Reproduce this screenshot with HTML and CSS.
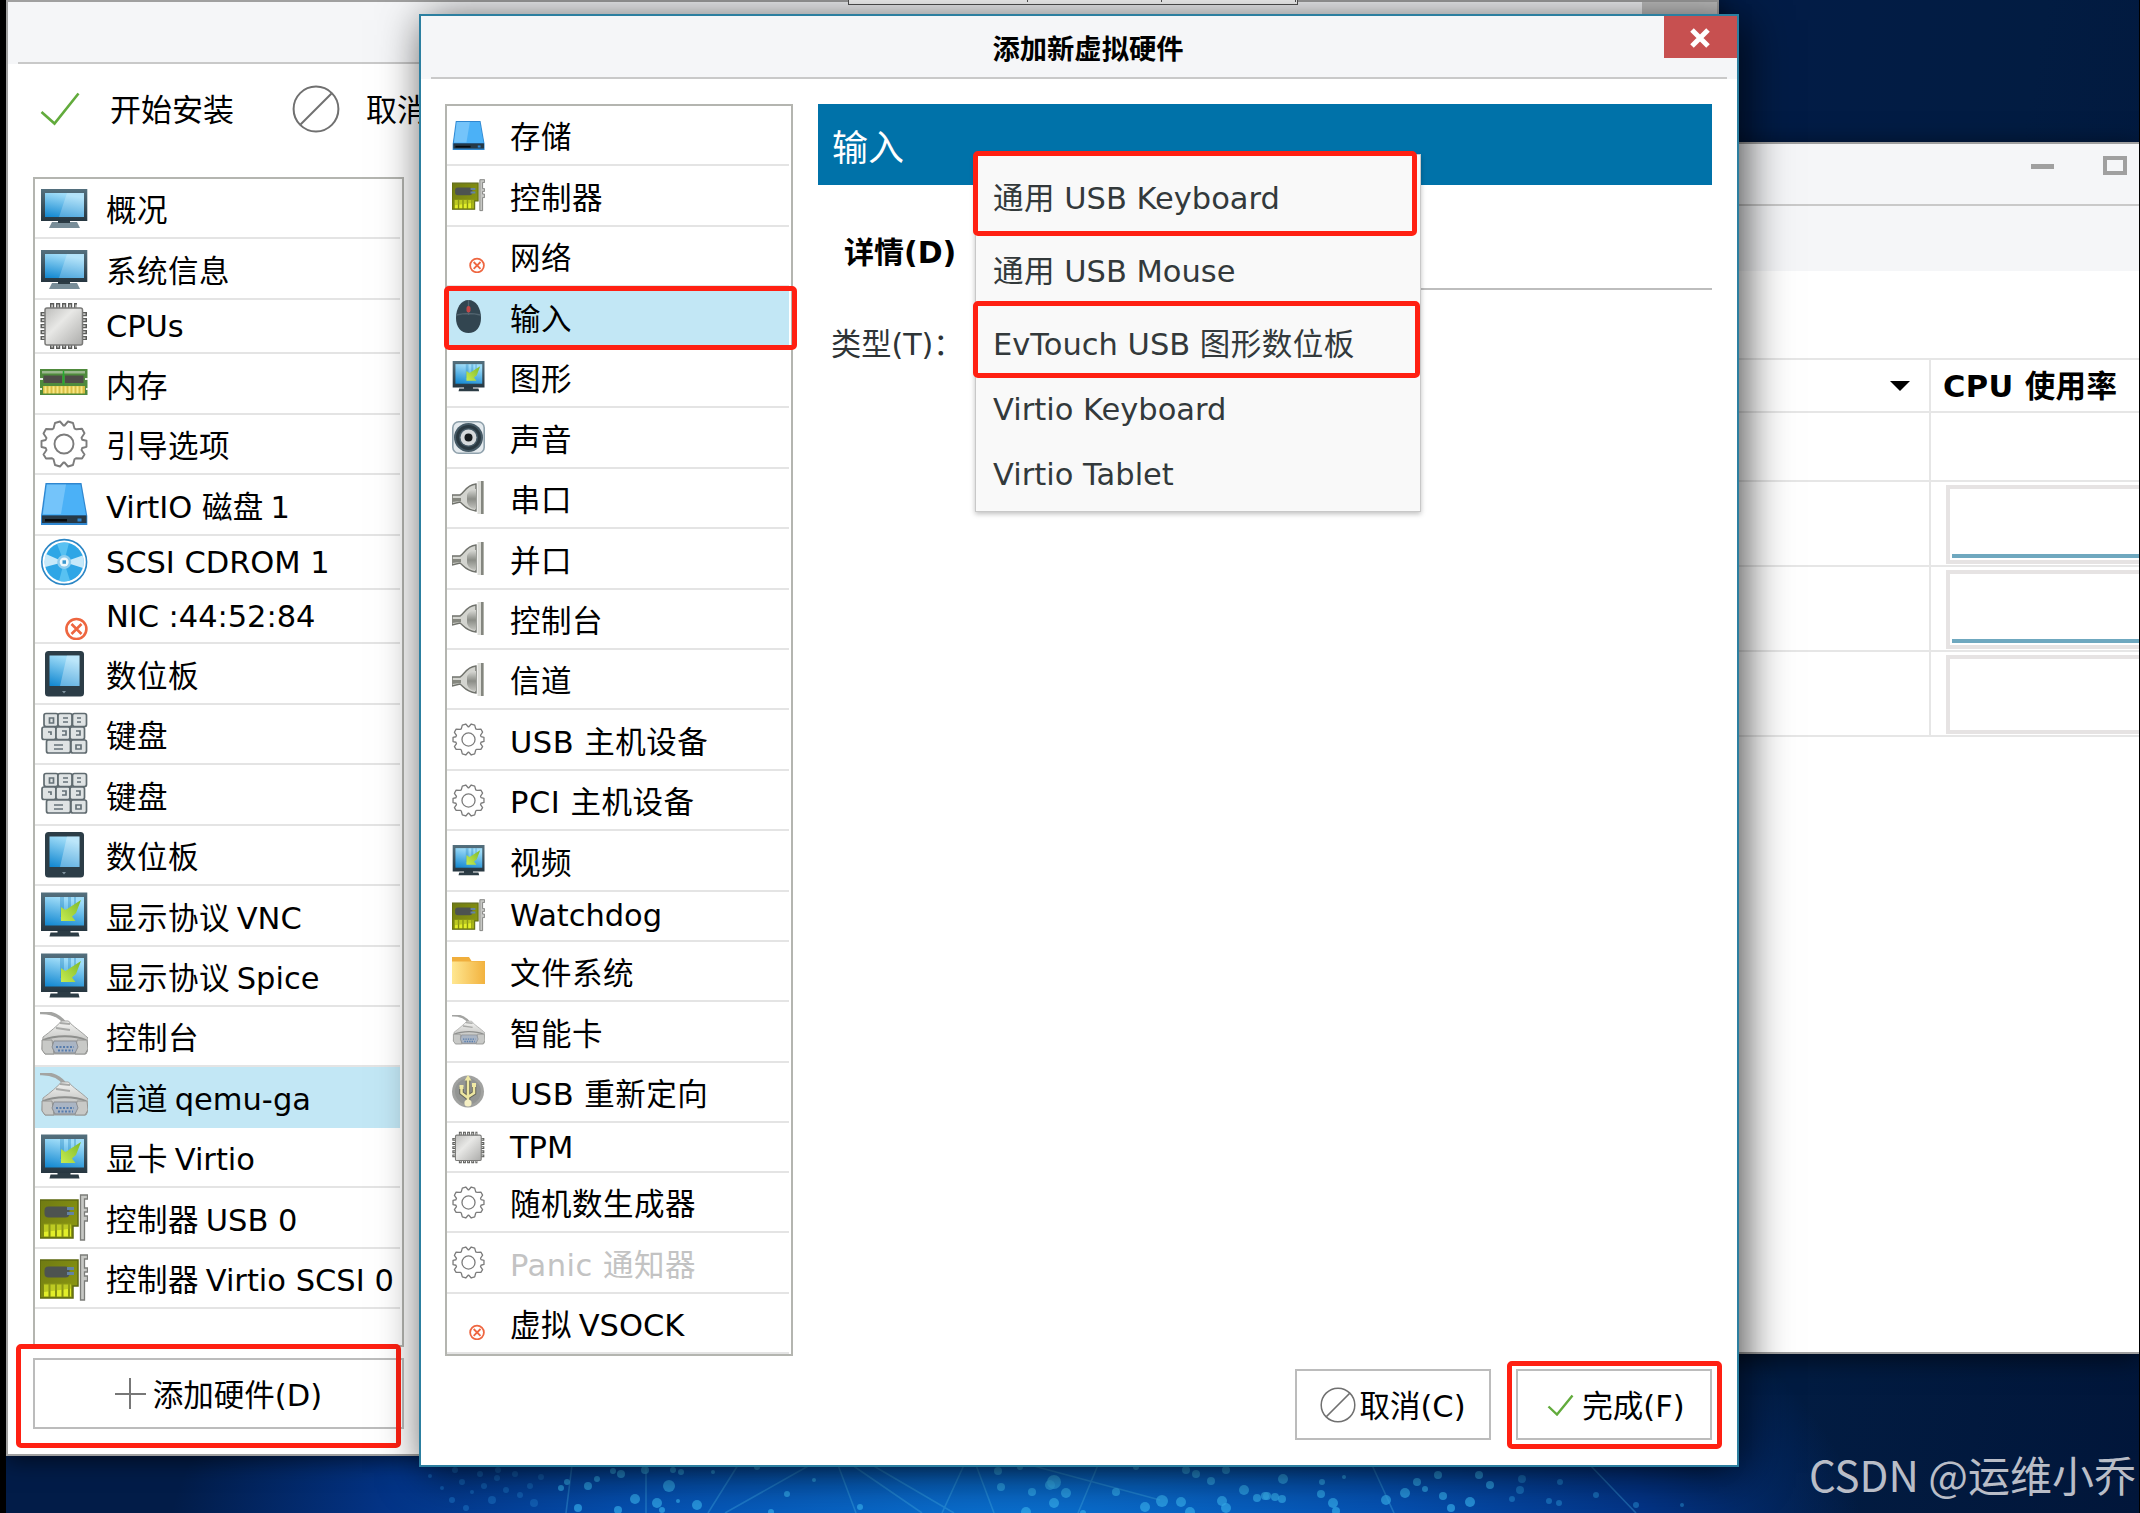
FILE: index.html
```html
<!DOCTYPE html>
<html lang="zh-CN">
<head>
  <meta charset="UTF-8" />
  <title>添加新虚拟硬件</title>
  <link rel="stylesheet" href="styles.css">
</head>
<body>

  <!-- icon definitions -->
  <svg class="defs" width="0" height="0">
    <defs>
      <linearGradient id="gScreen" x1="0.3" y1="0" x2="0" y2="1"><stop offset="0" stop-color="#9fdcf8"/><stop offset="1" stop-color="#0f86d0"/></linearGradient>
      <linearGradient id="gFrame" x1="0" y1="0" x2="0" y2="1"><stop offset="0" stop-color="#54707e"/><stop offset="1" stop-color="#263640"/></linearGradient>
      <linearGradient id="gArrow" x1="1" y1="0" x2="0" y2="1"><stop offset="0" stop-color="#7cb82a"/><stop offset="1" stop-color="#c8ec50"/></linearGradient>
      <linearGradient id="gMetal" x1="0" y1="0" x2="1" y2="1"><stop offset="0" stop-color="#bcbcba"/><stop offset="0.4" stop-color="#e8e8e6"/><stop offset="1" stop-color="#acacaa"/></linearGradient>
      <linearGradient id="gFolder"><stop offset="0" stop-color="#ffe791"/><stop offset="1" stop-color="#f2b23e"/></linearGradient>
      <linearGradient id="gSilver" x1="0" y1="0" x2="0" y2="1"><stop offset="0" stop-color="#f4f4f2"/><stop offset="1" stop-color="#a9aaa8"/></linearGradient>
      <linearGradient id="gPcb" x1="0" y1="0" x2="1" y2="1"><stop offset="0" stop-color="#6f7a12"/><stop offset="1" stop-color="#8f9b12"/></linearGradient>
      <linearGradient id="gPlug" x1="0" y1="0" x2="0" y2="1"><stop offset="0" stop-color="#d8d9d5"/><stop offset="0.5" stop-color="#8b8d87"/><stop offset="1" stop-color="#c2c3be"/></linearGradient>
    </defs>

    <symbol id="monitor" viewBox="0 0 48 48">
      <path d="M9 44l3-6h25l3 6z" fill="#788d98"/>
      <path d="M18 36h12v3H18z" fill="#2b3b44"/>
      <path d="M1 5h46.300v32H1z" fill="url(#gFrame)"/>
      <path d="M5 9h39v24H5z" fill="url(#gScreen)"/>
      <path d="M27 9h17v24H19z" fill="#fff" opacity=".22"/>
    </symbol>

    <symbol id="display" viewBox="0 0 48 48">
      <path d="M9.500 45.500l1-4h7v-3h13v3h8l1 4z" fill="#2c3c45"/>
      <path d="M1 1.500h46.300V40H1z" fill="url(#gFrame)"/>
      <path d="M5 6h39v28.500H5z" fill="url(#gScreen)"/>
      <path d="M20 6h4v20h-4zM28 6h3v12h-3zM34 6h2v9h-2z" fill="#0d74b4" opacity=".3"/>
      <path d="M21 16l4.500 3L41 9l-5 13-4 3.500 3.500 4.500H21z" fill="url(#gArrow)"/>
    </symbol>

    <symbol id="cpu" viewBox="0 0 48 48">
      <path d="M10 4.500h27M10 43.500h27M4 10v28M43.500 10v28" stroke="#5b5c5a" stroke-width="7" stroke-dasharray="4.200 1.800" fill="none"/>
      <path d="M10 4.500h27M10 43.500h27M4 10v28M43.500 10v28" stroke="#c9c9c7" stroke-width="4" stroke-dasharray="1.600 4.400" stroke-dashoffset="-1.300" fill="none"/>
      <rect x="5" y="6" width="37.500" height="37" rx="2" fill="url(#gMetal)" stroke="#7a7a78" stroke-width="1.500"/>
    </symbol>

    <symbol id="memory" viewBox="0 0 48 48">
      <path d="M0 10h47.500v26H0z" fill="#4f8a3c"/>
      <path d="M2 12h43v2.500H2z" fill="#9bb78e"/>
      <path d="M3.500 16.500H22V24H3.500zM25 16.500h18.500V24H25z" fill="#4e4c48"/>
      <path d="M3 27h42v7.500H3z" fill="#d8bf45"/>
      <path d="M4.500 30.700h39" stroke="#f8e783" stroke-width="7" stroke-dasharray="2 2"/>
      <path d="M23.500 12v14" stroke="#25a833" stroke-width="1.500"/>
      <path d="M0 20h3M45 20h3M0 30h2M46 30h2" stroke="#e8efe4" stroke-width="2"/>
    </symbol>

    <symbol id="gear" viewBox="0 0 48 48">
      <g fill="none" stroke="#7c7c7c" stroke-width="1.900" stroke-linejoin="round">
        <circle cx="24" cy="24" r="9.500"/>
        <path d="M15 3l5-1.500 3.500 4h1l3.500-4L33 3l1.500 5.500.8.500 1.200.3 5.500-.5 2.500 4.500-3 4.500.7 2 4.300 1v6l-4.300 1.200-.7 2 3 4.500-2.500 4-6-.2-1.500 1L33 45l-5 1.500-3.500-4h-1l-3.500 4L15 45l-1.500-5.700-1.500-1-6 .2L3.500 34.500l3-4.500-.8-2L1.500 27v-6l4.200-1 .8-2-3-4.500L6 9l6 .3 1.500-.8z"/>
      </g>
    </symbol>

    <symbol id="disk" viewBox="0 0 48 48">
      <path d="M5.500 3h36L47.300 36v9H1v-9z" fill="#2f86cf"/>
      <path d="M6.500 4.500h34L46 35H2.500z" fill="#4bb1f7"/>
      <path d="M7 4.500h19L21 34H3z" fill="#8fd0fb" opacity=".6"/>
      <path d="M2 35.500h44.500v7.500H2z" fill="#263947"/>
      <path d="M5 39h22v2.500H5z" fill="#06090c"/>
      <path d="M37.500 38.500h4v3h-4z" fill="#2f86cf"/>
    </symbol>

    <symbol id="cdrom" viewBox="0 0 48 48">
      <circle cx="24.200" cy="24" r="22.400" fill="#fff" stroke="#2b86c5" stroke-width="1.600"/>
      <circle cx="24.200" cy="24" r="19.500" fill="#2ea6e6"/>
      <path d="M24 24L6 16a19.500 19.500 0 0 0-.8 13zM24 24l18.500-6.500a19.500 19.500 0 0 1 .5 12.500z" fill="#c6e9fa"/>
      <path d="M24 24L17 6a19.500 19.500 0 0 1 12-1zM24 24l6 18.500a19.500 19.500 0 0 1-11 .5z" fill="#58c1f2"/>
      <circle cx="24.200" cy="24" r="7" fill="#8fcdee"/>
      <circle cx="24.200" cy="24" r="4.500" fill="#f0f8fc"/>
      <path d="M22.500 22.300h3.500v3.500h-3.500z" fill="#3d98cf"/>
    </symbol>

    <symbol id="nic" viewBox="0 0 48 48">
      <g fill="none" stroke="#ee6640">
        <circle cx="36.400" cy="37" r="10" stroke-width="2.600"/>
        <path d="M31.500 32l10 10M41.500 32l-10 10" stroke-width="2.600"/>
      </g>
    </symbol>

    <symbol id="tablet" viewBox="0 0 48 48">
      <rect x="5" y="1" width="39" height="45.500" rx="3.500" fill="#2c3d47"/>
      <path d="M9.500 5.500h30V36h-30z" fill="url(#gScreen)"/>
      <path d="M27 5.500h12.500V36H20z" fill="#fff" opacity=".3"/>
      <path d="M22 41h4l-2 2.500z" fill="#8194a0"/>
    </symbol>

    <symbol id="keyboard" viewBox="0 0 48 48">
      <g fill="#dfe3e4" stroke="#606b70" stroke-width="1.700">
        <rect x="4" y="3.500" width="14" height="13" rx="2"/><rect x="18" y="3.500" width="14" height="13" rx="2"/><rect x="32.500" y="3.500" width="14" height="13" rx="2"/>
        <rect x="2" y="17" width="14" height="12.500" rx="2"/><rect x="16" y="17" width="14" height="12.500" rx="2"/><rect x="30" y="17" width="14.500" height="12.500" rx="2"/>
        <rect x="6.500" y="30" width="24" height="13" rx="2"/><rect x="31" y="30" width="15.500" height="13" rx="2"/>
      </g>
      <path d="M9.500 8h4v5h-4zM23 8h5M23 12h5M37 8h4M37 12h4M8 22h3v3M22 21h4v4h-4M36 21h4v4h-4M14 35h9M14 39h9M36 35h5v4h-5z" fill="none" stroke="#667278" stroke-width="1.700"/>
    </symbol>

    <symbol id="serial" viewBox="0 0 48 48">
      <path d="M0 .5C12 0 21 5 25.500 12" fill="none" stroke="#a3a4a2" stroke-width="3.500"/>
      <path d="M3 25C10 20 18 13 21.500 9h7C32 14 42 20 48 26l1 10-3 6H5l-3-5z" fill="url(#gSilver)" stroke="#a0a19f"/>
      <path d="M3 28c12-5 32-5 43 0" fill="none" stroke="#8e8f8d" stroke-width="1.800"/>
      <path d="M20 11l10 1M16 16l14 2" stroke="#a8a9a7" stroke-width="2"/>
      <path d="M2 28h10l2 14H5l-3-4zM47 28H37l-2 14h10l3-5z" fill="#c8c9c7" stroke="#939492"/>
      <path d="M14 29h22l2 6-3 6H15l-3-6z" fill="#aab5c4" stroke="#8c8f93"/>
      <path d="M16 35h18M18 38.500h15" stroke="#577dad" stroke-width="2" stroke-dasharray="2 1.500"/>
    </symbol>

    <symbol id="card" viewBox="0 0 48 48">
      <path d="M0 6h38v26h-5v12H0z" fill="url(#gPcb)" stroke="#5d6810" stroke-width="1.500"/>
      <rect x="4.500" y="12.500" width="25" height="11" rx="4" fill="#4d5350"/>
      <path d="M27 13h7v3h-7zM27 18h7v3h-7z" fill="#6383a4"/>
      <path d="M4 36.500h27" stroke="#e2ee2a" stroke-width="12" stroke-dasharray="4.500 2"/>
      <path d="M3.500 29.500h28v5L4 38z" fill="#98a51a" opacity=".5"/>
      <path d="M40.500 1h7v4h-3v9h3v4h-3v4h3v5h-3v19h-4z" fill="#c7c8c5" stroke="#7c7d7a" stroke-width="1.300"/>
    </symbol>

    <symbol id="mouse" viewBox="0 0 33 33">
      <path d="M16.500 0C9 0 4 8 4 18c0 9 5 15 12.500 15S29 27 29 18C29 8 24 0 16.500 0z" fill="#324550"/>
      <path d="M16.500 0v15M4.500 15c8-2 16-2 24 0" fill="none" stroke="#52646f" stroke-width="1.300"/>
      <rect x="14.500" y="6" width="4" height="6.500" rx="2" fill="#c54646"/>
    </symbol>

    <symbol id="sound" viewBox="0 0 33 33">
      <rect x=".8" y=".8" width="31.400" height="31.400" rx="6" fill="#e4eaee" stroke="#8fa1ac" stroke-width="1.600"/>
      <circle cx="16.500" cy="16.500" r="14.500" fill="#465a66"/>
      <circle cx="16.500" cy="16.500" r="11" fill="none" stroke="#2a3942" stroke-width="3"/>
      <circle cx="16.500" cy="16.500" r="8" fill="#d5d9dc"/>
      <circle cx="16.500" cy="16.500" r="4" fill="#151a1d"/>
    </symbol>

    <symbol id="port" viewBox="0 0 33 33">
      <path d="M0 14h8c4-2 6-10 16-11v27c-10-1-12-6-16-9l-8 2z" fill="#d3d4cf" stroke="#70726c" stroke-width="1.400"/>
      <path d="M0 17h9v3l-9 1z" fill="#85877f"/>
      <path d="M15 14c1-4 5-6 9-6v20c-5 0-8-3-9-7z" fill="url(#gPlug)"/>
      <path d="M25.500 0h6.500v33h-6.500z" fill="#dcddd8"/>
      <path d="M29 0h2.500v33H29z" fill="#84867f"/>
    </symbol>

    <symbol id="folder" viewBox="0 0 33 33">
      <path d="M0 3h17l2.500 4H33v10H0z" fill="#f0ae3c"/>
      <path d="M0 7.500h33V30H0z" fill="url(#gFolder)"/>
    </symbol>

    <symbol id="usb" viewBox="0 0 33 33">
      <circle cx="16" cy="16.500" r="16" fill="#a1a2a0"/>
      <circle cx="16" cy="16.500" r="13" fill="#8b8c8a" opacity=".6"/>
      <g fill="none" stroke="#64645a" stroke-width="4.500"><path d="M16 4v23M9.500 12v6l6.500 5M22 10v8l-6 4"/></g>
      <g fill="none" stroke="#ede6a0" stroke-width="2.500"><path d="M16 4v23M9.500 12v6l6.500 5M22 10v8l-6 4"/></g>
      <path d="M12.500 5.500L16 0l3.500 5.500zM7.500 10h4v4h-4zM20 8h4v4h-4z" fill="#f0e9a5"/>
      <circle cx="16" cy="28" r="3.600" fill="#f6f0c4"/>
    </symbol>

    <symbol id="forbid" viewBox="0 0 48 48">
      <g fill="none" stroke="#707070" stroke-width="2"><circle cx="24" cy="24" r="22.400"/><path d="M8.500 39.500l31-31"/></g>
    </symbol>
    <symbol id="tick" viewBox="0 0 40 34">
      <path d="M1.500 20L14.500 31.500 38.500 1.500" fill="none" stroke="#62ab3c" stroke-width="2.600"/>
    </symbol>
    <symbol id="tick-small" viewBox="0 0 27 22">
      <path d="M1.500 12.500L10 20.500 25.500 1.500" fill="none" stroke="#62ab3c" stroke-width="2.400"/>
    </symbol>
  </svg>

  <div class="desktop">
    <svg class="wallpaper" id="wallpaper" width="2140" height="73" viewBox="0 1440 2140 73">
      <g stroke="#48b4e8" stroke-width="1.600" opacity=".35">
        <path d="M738 1465l-30 48M810 1465l-85 48M838 1465l18 48M852 1465l70 48M872 1465l82 48M964 1465l-22 48M976 1465l18 48M1030 1465l130 35M1098 1465l-20 48M1372 1465l22 48M1590 1465l46 48M572 1465l-6 48M646 1465v48"/>
      </g>
    </svg>

    <!-- virt-manager main window -->
    <section class="window manager">
      <div class="titlebar">
        <span class="minimize"></span>
        <span class="maximize"></span>
      </div>
      <div class="manager-tools"></div>
      <div class="manager-gap"></div>
      <div class="vm-table">
        <div class="cell head sort"><i class="caret"></i></div><div class="cell head cpu-head">CPU 使用率</div>
        <div class="cell"></div><div class="cell"></div>
        <div class="cell vm"></div><div class="cell vm"><div class="graph busy"></div></div>
        <div class="cell vm"></div><div class="cell vm"><div class="graph busy"></div></div>
        <div class="cell vm"></div><div class="cell vm"><div class="graph"></div></div>
      </div>
    </section>

    <!-- machine details window -->
    <section class="window details">
      <div class="titlebar"><span class="inactive-close"></span></div>
      <div class="toolbar">
        <svg class="tick"><use href="#tick"/></svg><span>开始安装</span>
        <svg class="forbid"><use href="#forbid"/></svg><span>取消安装</span>
      </div>
      <ul class="hw-list">
        <li><svg><use href="#monitor"/></svg><span>概况</span></li>
        <li><svg><use href="#monitor"/></svg><span>系统信息</span></li>
        <li class="latin"><svg><use href="#cpu"/></svg><span>CPUs</span></li>
        <li><svg><use href="#memory"/></svg><span>内存</span></li>
        <li><svg><use href="#gear"/></svg><span>引导选项</span></li>
        <li><svg><use href="#disk"/></svg><span>VirtIO <b>磁盘 </b>1</span></li>
        <li class="latin"><svg><use href="#cdrom"/></svg><span>SCSI CDROM 1</span></li>
        <li class="latin"><svg><use href="#nic"/></svg><span>NIC :44:52:84</span></li>
        <li><svg><use href="#tablet"/></svg><span>数位板</span></li>
        <li><svg><use href="#keyboard"/></svg><span>键盘</span></li>
        <li><svg><use href="#keyboard"/></svg><span>键盘</span></li>
        <li><svg><use href="#tablet"/></svg><span>数位板</span></li>
        <li><svg><use href="#display"/></svg><span><b>显示协议 </b>VNC</span></li>
        <li><svg><use href="#display"/></svg><span><b>显示协议 </b>Spice</span></li>
        <li><svg><use href="#serial"/></svg><span>控制台</span></li>
        <li class="selected"><svg><use href="#serial"/></svg><span><b>信道 </b>qemu-ga</span></li>
        <li><svg><use href="#display"/></svg><span><b>显卡 </b>Virtio</span></li>
        <li><svg><use href="#card"/></svg><span><b>控制器 </b>USB 0</span></li>
        <li><svg><use href="#card"/></svg><span><b>控制器 </b>Virtio SCSI 0</span></li>
      </ul>
      <div class="add-row">
        <button class="add-btn"><i class="plus"></i><span>添加硬件(D)</span></button>
        <div class="mark mark-add"></div>
      </div>
    </section>

    <div class="top-panel"><i></i><i></i><i></i></div>

    <!-- add hardware dialog -->
    <section class="window dialog">
      <div class="titlebar">
        <h1>添加新虚拟硬件</h1>
        <button class="close"><svg viewBox="0 0 20 20"><path d="M2 2l16 16M18 2L2 18" stroke="#fff" stroke-width="5"/></svg></button>
      </div>
      <div class="dialog-body">
        <ul class="hw-list small">
          <li><svg><use href="#disk"/></svg><span>存储</span></li>
          <li><svg><use href="#card"/></svg><span>控制器</span></li>
          <li><svg><use href="#nic"/></svg><span>网络</span></li>
          <li class="selected"><svg><use href="#mouse"/></svg><span>输入</span><div class="mark mark-row"></div></li>
          <li><svg><use href="#display"/></svg><span>图形</span></li>
          <li><svg><use href="#sound"/></svg><span>声音</span></li>
          <li><svg><use href="#port"/></svg><span>串口</span></li>
          <li><svg><use href="#port"/></svg><span>并口</span></li>
          <li><svg><use href="#port"/></svg><span>控制台</span></li>
          <li><svg><use href="#port"/></svg><span>信道</span></li>
          <li><svg><use href="#gear"/></svg><span>USB 主机设备</span></li>
          <li><svg><use href="#gear"/></svg><span>PCI 主机设备</span></li>
          <li><svg><use href="#display"/></svg><span>视频</span></li>
          <li class="latin"><svg><use href="#card"/></svg><span>Watchdog</span></li>
          <li><svg><use href="#folder"/></svg><span>文件系统</span></li>
          <li><svg><use href="#serial"/></svg><span>智能卡</span></li>
          <li><svg><use href="#usb"/></svg><span>USB 重新定向</span></li>
          <li class="latin"><svg><use href="#cpu"/></svg><span>TPM</span></li>
          <li><svg><use href="#gear"/></svg><span>随机数生成器</span></li>
          <li class="disabled"><svg><use href="#gear"/></svg><span>Panic 通知器</span></li>
          <li><svg><use href="#nic"/></svg><span><b>虚拟 </b>VSOCK</span></li>
        </ul>

        <div class="page">
          <h2>输入</h2>
          <div class="tab"><span>详情(D)</span><hr></div>
          <div class="type-row">类型(T)：</div>

          <div class="menu">
            <div class="item"><b>通用 </b>USB Keyboard</div>
            <div class="item"><b>通用 </b>USB Mouse</div>
            <div class="item">EvTouch USB <b>图形数位板</b></div>
            <div class="item latin">Virtio Keyboard</div>
            <div class="item latin">Virtio Tablet</div>
            <div class="mark mark-kbd"></div>
            <div class="mark mark-tablet"></div>
          </div>
        </div>
      </div>
      <div class="actions">
        <button><svg class="forbid"><use href="#forbid"/></svg><span>取消(C)</span></button>
        <button class="finish"><svg class="tick"><use href="#tick-small"/></svg><span>完成(F)</span><div class="mark mark-finish"></div></button>
      </div>
    </section>

    <div class="watermark">CSDN @<span>运维小乔</span></div>
  </div>

  <script>
    // wallpaper dots: x, y, size
    const dots = [
      [430,1476,2],[442,1488,2],[455,1470,3],[462,1482,3],[472,1492,2],[480,1474,3],[452,1500,3],[466,1508,3],[484,1486,3],
      [497,1478,3],[492,1500,4],[506,1490,3],[515,1474,3],[520,1495,3],[530,1486,3],[534,1503,4],[541,1477,3],[498,1470,3],
      [561,1488,3],[567,1482,3],[578,1508,4],[588,1486,4],[597,1479,3],[613,1471,3],[621,1474,4],[618,1510,4],[635,1499,5],
      [645,1470,4],[657,1503,5],[662,1510,3],[669,1486,6],[673,1470,3],[681,1472,3],[678,1501,2],[697,1505,5],[713,1472,2],
      [757,1467,3],[771,1512,3],[787,1494,3],[814,1480,2],[860,1507,3],[998,1471,4],[1001,1487,4],[1020,1467,3],[1026,1512,5],
      [1032,1492,4],[1054,1482,7],[1050,1485,5],[1066,1493,5],[1054,1503,5],[1083,1513,3],[1116,1492,4],[1136,1467,3],
      [1145,1507,5],[1162,1501,6],[1181,1502,5],[1190,1512,5],[1186,1470,4],[1196,1474,4],[1211,1481,4],[1222,1501,5],
      [1226,1508,5],[1226,1470,4],[1244,1490,5],[1257,1498,4],[1267,1496,4],[1283,1479,5],[1282,1499,4],[1265,1496,4],
      [1275,1497,4],[1321,1494,4],[1333,1503,5],[1336,1511,4],[1322,1482,3],[1344,1477,2],[1386,1500,5],[1405,1493,5],
      [1417,1482,4],[1425,1489,3],[1438,1475,4],[1443,1496,4],[1451,1508,4],[1470,1502,5],[1479,1475,4],[1490,1485,4],
      [1512,1499,3],[1522,1479,4],[1520,1490,4],[1549,1501,3],[1559,1503,3],[1560,1482,3],[1596,1495,3],[1636,1505,3],[1682,1505,2]
    ];
    const wall = document.getElementById("wallpaper");
    dots.forEach(([x, y, r]) => {
      const dot = document.createElementNS("http://www.w3.org/2000/svg", "circle");
      dot.setAttribute("cx", x);
      dot.setAttribute("cy", y);
      dot.setAttribute("r", r);
      dot.setAttribute("fill", x < 560 ? "#1769bd" : "#35aef0");
      dot.setAttribute("opacity", x > 1500 ? 0.4 : 0.7);
      wall.appendChild(dot);
    });
  </script>
</body>
</html>
```

FILE: styles.css
```css
* {
  box-sizing: border-box;
}

body {
  margin: 0;
  font-family: "DejaVu Sans", "Noto Sans CJK SC", sans-serif;
  font-size: 30.500px;
  line-height: 1;
  color: #000;
}

h1, h2, ul {
  margin: 0;
  padding: 0;
}

button {
  font: inherit;
  color: inherit;
  padding: 0;
  background: #fff;
  border: 2px solid #bcbcbc;
}

.defs {
  position: absolute;
}

.desktop {
  position: relative;
  width: 2140px;
  height: 1513px;
  overflow: hidden;
  border-left: 6px solid #000;
  border-right: 1px solid #000;
  background: radial-gradient(ellipse 850px 420px at 1010px 1560px, #0b78d8 0%, #0552b4 45%, #033487 75%, rgba(2, 29, 72, 0) 100%),
    linear-gradient(100deg, #021c48 70%, #021c42 85%, #01163a 100%);
}

.wallpaper {
  position: absolute;
  left: -6px;
  bottom: 0;
}

/* windows */
.window {
  position: absolute;
  background: #fff;
  border: 2px solid #a0a0a0;
}

.titlebar {
  position: relative;
  height: 62px;
  background: #f5f6f8;
}

.titlebar::after {
  content: "";
  position: absolute;
  left: 10px;
  right: 10px;
  bottom: 0;
  height: 2px;
  background: #c9c9c9;
}

.manager {
  left: 1500px;
  top: 142px;
  width: 633px;
  height: 1212px;
  border-right: 0;
  box-shadow: 0 5px 24px rgba(0, 0, 0, 0.6);
}

.manager .titlebar {
  height: 62px;
  display: flex;
  justify-content: flex-end;
  gap: 49px;
  padding: 12px 12px 0 0;
}

.manager .titlebar::after {
  right: 0;
}

.minimize {
  width: 23px;
  height: 5px;
  margin-top: 8px;
  background: #a0a0a0;
}

.maximize {
  width: 24px;
  height: 19px;
  border: 4px solid #a0a0a0;
}

.manager-tools {
  height: 65px;
  background: #f5f6f8;
}

.manager-gap {
  height: 87px;
}

.vm-table {
  display: grid;
  grid-template-columns: 423px 1fr;
  grid-template-rows: 53px 68.500px 85.300px 85.300px 85.300px;
  border-top: 2px solid #e6e6e6;
}

.cell {
  border-bottom: 2px solid #e6e6e6;
  border-right: 2px solid #e6e6e6;
}

.cell:nth-child(even) {
  border-right: 0;
}

.head {
  display: flex;
  align-items: center;
  padding-left: 12px;
  font-weight: bold;
}

.cpu-head {
  padding-top: 4px;
  letter-spacing: 0.400px;
}

.sort {
  justify-content: flex-end;
  padding-right: 19px;
}

.caret {
  border: 10px solid transparent;
  border-top-color: #000;
  border-bottom: 0;
}

.vm {
  padding: 3px 0 2px 15px;
}

.graph {
  height: 79px;
  border: 4px solid #e6e3e3;
  border-right: 0;
  padding: 65px 0 0 2px;
}

.graph.busy::before {
  content: "";
  display: block;
  height: 4px;
  background: #6fa8bf;
}

/* machine details */
.details {
  left: 0;
  top: 0;
  width: 1713px;
  height: 1456px;
  box-shadow: 0 4px 22px rgba(0, 0, 0, 0.6);
}

.inactive-close {
  position: absolute;
  right: 0;
  top: 0;
  width: 75px;
  height: 42px;
  background: #c2c2c2;
}

.toolbar {
  display: flex;
  align-items: center;
  height: 90px;
  padding-left: 32px;
  font-size: 31px;
}

.toolbar span {
  padding-top: 3px;
}

.toolbar .tick {
  width: 40px;
  height: 34px;
  margin-right: 30px;
}

.toolbar .forbid {
  width: 48px;
  height: 48px;
  margin: 0 26px 0 58px;
}

.hw-list {
  width: 371px;
  height: 1170px;
  margin: 23px 0 0 25px;
  padding-right: 2px;
  border: 2px solid #b4b5b0;
  list-style: none;
}

.hw-list li {
  position: relative;
  display: flex;
  align-items: center;
  height: 60.450px;
  padding-left: 5px;
  border-bottom: 2px solid #e4e4e4;
  white-space: nowrap;
}

.hw-list li.latin {
  height: 54.400px;
}

.hw-list span {
  padding-top: 7px;
  letter-spacing: 0.500px;
}

.hw-list span:has(b) {
  letter-spacing: 0;
}

.hw-list li.latin span {
  padding-top: 2px;
  letter-spacing: -0.050px;
}

.hw-list svg {
  width: 48px;
  height: 48px;
  margin-right: 18px;
  flex: none;
  overflow: visible;
}

.hw-list li.selected {
  background: #c2e7f5;
  border-color: #c2e7f5;
}

.hw-list li.disabled span {
  color: #c3c3c3;
}

/* the space after a Chinese word is narrower */
b {
  font-weight: normal;
  letter-spacing: 0.500px;
  word-spacing: -3.500px;
}

.add-row {
  position: relative;
  margin: 11px 0 0 25px;
  width: 371px;
}

.add-btn {
  display: flex;
  align-items: center;
  justify-content: center;
  width: 371px;
  height: 71px;
}

.add-btn span,
.actions span {
  padding-top: 5px;
}

.plus {
  width: 31px;
  height: 31px;
  margin-right: 7px;
  background: linear-gradient(#777, #777) center / 31px 2px no-repeat, linear-gradient(#777, #777) center / 2px 31px no-repeat;
}

.top-panel {
  position: absolute;
  left: 842px;
  top: 0;
  width: 450px;
  height: 5px;
  display: flex;
  gap: 133px;
  padding-left: 178px;
  background: #fff;
  border: 1px solid #555;
  border-top: 0;
}

.top-panel i {
  width: 1px;
  height: 2px;
  background: #555;
}

/* dialog */
.dialog {
  left: 413px;
  top: 14px;
  width: 1320px;
  height: 1453px;
  border-color: #2c7fa0;
  box-shadow: 6px 6px 42px rgba(0, 0, 0, 0.7);
}

.dialog .titlebar {
  height: 63px;
}

.dialog h1 {
  padding-left: 18px;
  text-align: center;
  font-size: 27.300px;
  line-height: 67px;
}

.close {
  position: absolute;
  right: 0;
  top: 0;
  width: 73px;
  height: 42px;
  border: 0;
  background: #c75050;
}

.close svg {
  display: block;
  width: 20px;
  height: 20px;
  margin: 2px 0 0 26px;
}

.dialog-body {
  display: flex;
  gap: 25px;
  padding: 25px 25px 0 24px;
}

.hw-list.small {
  width: 348px;
  height: 1252px;
  margin: 0;
  flex: none;
}

.small svg {
  width: 33px;
  height: 33px;
  margin-right: 25px;
}

.hw-list.small li.latin {
  height: 50px;
}

.page {
  position: relative;
  flex: 1;
}

.page h2 {
  height: 81px;
  padding-left: 14px;
  font-size: 36px;
  font-weight: normal;
  line-height: 90px;
  color: #fff;
  background: #0072a9;
}

.tab {
  display: flex;
  justify-content: space-between;
  align-items: flex-end;
  height: 105px;
  padding-left: 26px;
  font-size: 30px;
  font-weight: bold;
}

.tab span {
  align-self: flex-start;
  padding-top: 53px;
}

.tab hr {
  width: 300px;
  height: 2px;
  margin: 0;
  border: 0;
  background: #bdbdbd;
}

.type-row {
  padding: 40px 0 0 13px;
  color: #2e3436;
  font-size: 30.200px;
}

.menu {
  position: absolute;
  left: 157px;
  top: 50px;
  width: 446px;
  height: 358px;
  padding-top: 8px;
  background: #f9f9f9;
  border: 1px solid #c8c8c8;
  box-shadow: 0 2px 5px rgba(0, 0, 0, 0.25);
}

.item {
  display: flex;
  align-items: center;
  height: 73px;
  padding-left: 17px;
  color: #33393b;
  white-space: pre;
}

.item b {
  word-spacing: -1px;
}

.item.latin {
  height: 65px;
  padding-bottom: 9px;
}

.actions {
  display: flex;
  justify-content: flex-end;
  gap: 25px;
  padding: 13px 25px 0 0;
}

.actions button {
  position: relative;
  display: flex;
  align-items: center;
  justify-content: center;
  width: 196px;
  height: 71px;
}

.actions .forbid {
  width: 36px;
  height: 36px;
  margin-right: 3px;
}

.actions .tick {
  width: 27px;
  height: 22px;
  margin: 0 8px 0 4px;
}

/* red highlight boxes */
.mark {
  position: absolute;
  border: 5px solid #ff2012;
  border-radius: 5px;
}

.mark-add {
  left: -17px;
  top: -14px;
  width: 385px;
  height: 104px;
}

.mark-row {
  left: -3px;
  top: -1px;
  width: 353px;
  height: 64px;
}

.mark-kbd {
  left: -3px;
  top: -4px;
  width: 444px;
  height: 85px;
}

.mark-tablet {
  left: -3px;
  top: 146px;
  width: 447px;
  height: 77px;
}

.mark-finish {
  left: -11px;
  top: -10px;
  width: 215px;
  height: 88px;
}

.watermark {
  position: absolute;
  right: 3px;
  bottom: 18px;
  font-family: "Noto Sans CJK SC", sans-serif;
  font-size: 42px;
  color: #b9bdc7;
}
```
